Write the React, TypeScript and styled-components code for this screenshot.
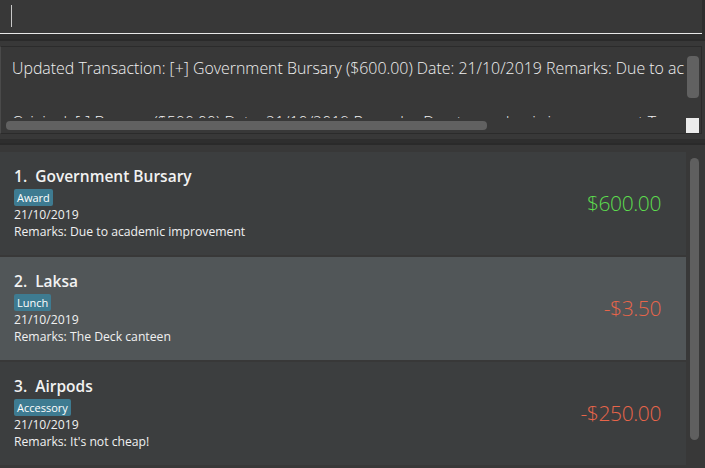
import React from "react";
import styled, { createGlobalStyle } from "styled-components";

type Entry = {
  title: string;
  tag: string;
  date: string;
  remarks: string;
  amount: string;
  income: boolean;
};

const entries: Entry[] = [
  {
    title: "Government Bursary",
    tag: "Award",
    date: "21/10/2019",
    remarks: "Due to academic improvement",
    amount: "$600.00",
    income: true,
  },
  {
    title: "Laksa",
    tag: "Lunch",
    date: "21/10/2019",
    remarks: "The Deck canteen",
    amount: "-$3.50",
    income: false,
  },
  {
    title: "Airpods",
    tag: "Accessory",
    date: "21/10/2019",
    remarks: "It's not cheap!",
    amount: "-$250.00",
    income: false,
  },
];

function App() {
  return (
    <Window>
      <GlobalStyle />
      <CommandBox>
        <Caret />
      </CommandBox>
      <ResultPane>
        <ResultBox>
          <ResultText>
            <ResultLine>
              Updated Transaction: [+] Government Bursary ($600.00) Date: 21/10/2019 Remarks: Due to academic improvement Tags: [Award]
            </ResultLine>
            <ResultLine>
              Original: [-] Bursary ($500.00) Date: 21/10/2019 Remarks: Due to academic improvement Tags: [Award]
            </ResultLine>
          </ResultText>
          <VTrack>
            <VThumb />
          </VTrack>
          <HTrack>
            <HThumb />
          </HTrack>
          <Corner />
        </ResultBox>
      </ResultPane>
      <ListPane>
        <Cards>
          {entries.map((e, i) => (
            <Card key={e.title} odd={i % 2 === 1}>
              <Details>
                <Title>
                  {i + 1}.&nbsp;&nbsp;{e.title}
                </Title>
                <Tag>{e.tag}</Tag>
                <Small>{e.date}</Small>
                <Small>Remarks: {e.remarks}</Small>
              </Details>
              <Amount income={e.income}>{e.amount}</Amount>
            </Card>
          ))}
        </Cards>
        <ListTrack>
          <ListThumb />
        </ListTrack>
      </ListPane>
    </Window>
  );
}

const GlobalStyle = createGlobalStyle`
  html, body {
    margin: 0;
    padding: 0;
    background: #383838;
    overflow: hidden;
  }
`;

const Window = styled.div`
  width: 705px;
  height: 468px;
  display: flex;
  flex-direction: column;
  background: #2e2e2e;
  font-family: "Open Sans", "Noto Sans", sans-serif;
  overflow: hidden;
`;

const CommandBox = styled.div`
  height: 34px;
  background: #383838;
  border-bottom: 1px solid #e8e8e8;
  margin-right: 3px;
  padding: 5px 0 0 11px;
  box-sizing: border-box;
`;

const Caret = styled.div`
  width: 1px;
  height: 22px;
  background: #c8c8c8;
`;

const ResultPane = styled.div`
  margin-top: 5px;
  border-top: 2px solid #2a2a2a;
  background: #383838;
  padding: 5px 3px 5px 0;
`;

const ResultBox = styled.div`
  height: 88px;
  box-sizing: border-box;
  border: 1px solid #2b2b2b;
  border-left-color: #4a4a4a;
  background: #383838;
  display: grid;
  grid-template-columns: 1fr 17px;
  grid-template-rows: 1fr 15px;
`;

const ResultText = styled.div`
  overflow: hidden;
  padding: 10px 0 0 11px;
  color: #f0f0f0;
  font-weight: 300;
  font-size: 15.9px;
  white-space: nowrap;
`;

const ResultLine = styled.div`
  height: 54px;
  line-height: 22px;
`;

const VTrack = styled.div`
  padding: 9px 2px 0 3px;
`;

const VThumb = styled.div`
  height: 42px;
  border-radius: 4px;
  background: #616161;
`;

const HTrack = styled.div`
  padding: 3px 0 2px 5px;
`;

const HThumb = styled.div`
  width: 481px;
  height: 9px;
  border-radius: 4px;
  background: #616161;
`;

const Corner = styled.div`
  background: #ececec;
  margin: 0 2px 0 2px;
`;

const ListPane = styled.div`
  flex: 1;
  margin-top: 4px;
  border-top: 2px solid #2a2a2a;
  background: #383838;
  display: flex;
  padding-top: 7px;
`;

const Cards = styled.div`
  width: 686px;
  display: flex;
  flex-direction: column;
  gap: 2px;
`;

const Card = styled.div<{ odd: boolean }>`
  height: 103px;
  flex: none;
  display: flex;
  align-items: center;
  justify-content: space-between;
  padding: 0 25px 0 14px;
  box-sizing: border-box;
  background: ${(p) => (p.odd ? "#515658" : "#3c3e3f")};
`;

const Details = styled.div`
  display: flex;
  flex-direction: column;
  align-items: flex-start;
  color: #ffffff;
  padding-bottom: 1px;
`;

const Title = styled.div`
  font-size: 15.5px;
  font-weight: 600;
  line-height: 21px;
  margin-bottom: 2px;
  color: #f2f2f2;
`;

const Tag = styled.span`
  background: #3e7b91;
  color: #ffffff;
  font-size: 11px;
  line-height: 15px;
  padding: 1px 3px 1px 3px;
  border-radius: 2px;
`;

const Small = styled.div`
  font-size: 12.2px;
  line-height: 17.5px;
  color: #f0f0f0;
`;

const Amount = styled.div<{ income: boolean }>`
  font-size: 21px;
  font-weight: 300;
  letter-spacing: -0.4px;
  color: ${(p) => (p.income ? "#5ddc4e" : "#e8654a")};
  padding-bottom: 2px;
`;

const ListTrack = styled.div`
  flex: 1;
  padding: 6px 6px 0 4px;
`;

const ListThumb = styled.div`
  height: 282px;
  border-radius: 5px;
  background: #5f5f5f;
`;

export default App;
